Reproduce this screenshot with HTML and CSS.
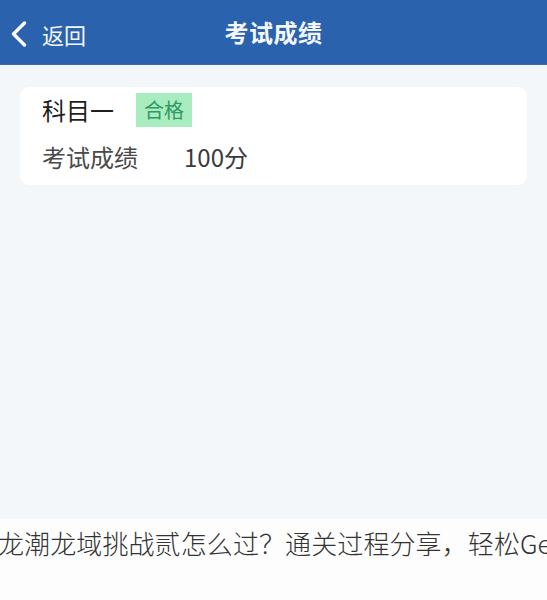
FILE: index.html
```html
<!DOCTYPE html>
<html lang="zh-CN">
<head>
<meta charset="utf-8">
<title>考试成绩</title>
<link rel="stylesheet" href="styles.css">
</head>
<body>
  <div class="screen">
    <header class="nav">
      <a class="back" href="#">
        <svg class="back-icon" viewBox="0 0 18 26" width="18" height="26" aria-hidden="true">
          <path d="M14.5 2 L3.5 13 L14.5 24" fill="none" stroke="#fff" stroke-width="3.4" stroke-linecap="round" stroke-linejoin="round"/>
        </svg>
        <span class="back-text">返回</span>
      </a>
      <h1 class="nav-title">考试成绩</h1>
    </header>
    <main class="content">
      <section class="card">
        <div class="card-head">
          <span class="subject">科目一</span>
          <span class="badge">合格</span>
        </div>
        <div class="card-row">
          <span class="label">考试成绩</span>
          <span class="value">100分</span>
        </div>
      </section>
    </main>
  </div>
  <p class="caption">龙潮龙域挑战贰怎么过？通关过程分享，轻松Ge</p>
</body>
</html>
```
FILE: styles.css
```css
* {
  box-sizing: border-box;
}

html, body {
  margin: 0;
  padding: 0;
}

body {
  width: 547px;
  height: 600px;
  overflow: hidden;
  background: #fdfdfd;
  font-family: "Noto Sans CJK SC", "Noto Sans", sans-serif;
}

.screen {
  height: 519px;
  background: #f4f7fa;
  display: flex;
  flex-direction: column;
}

.nav {
  height: 65px;
  background: #2b62ad;
  border-bottom: 1px solid #3f6a9f;
  display: flex;
  align-items: center;
  justify-content: center;
  position: relative;
}

.back {
  position: absolute;
  left: 10px;
  top: 21px;
  display: flex;
  align-items: center;
  gap: 14px;
  text-decoration: none;
  color: #f2f6fb;
}

.back-icon {
  display: block;
  width: 18px;
  height: 26px;
}

.back-text {
  font-size: 22px;
  line-height: 26px;
}

.nav-title {
  margin: 0;
  margin-top: -2px;
  font-size: 24px;
  font-weight: 700;
  color: #f4f7fb;
  letter-spacing: 0.5px;
}

.content {
  padding: 22px 20px 0 20px;
}

.card {
  background: #fff;
  border-radius: 9px;
  padding: 6px 22px 13px 22px;
  display: flex;
  flex-direction: column;
  gap: 15px;
}

.card-head {
  display: flex;
  align-items: center;
  gap: 22px;
}

.subject {
  font-size: 24px;
  line-height: 34px;
  color: #1f1f1f;
}

.badge {
  background: #a9ecbf;
  color: #2f9a63;
  font-size: 20px;
  line-height: 34px;
  padding: 0 8px;
}

.card-row {
  display: flex;
  align-items: center;
  gap: 46px;
  font-size: 24px;
  line-height: 30px;
  color: #4a4a4a;
}

.value {
  color: #3a3a3a;
}

.caption {
  margin: 4px 0 0 -2px;
  white-space: nowrap;
  font-family: "Noto Sans CJK SC", sans-serif;
  font-weight: 300;
  font-size: 26px;
  line-height: 40px;
  letter-spacing: 0.1px;
  color: #333;
}
```
